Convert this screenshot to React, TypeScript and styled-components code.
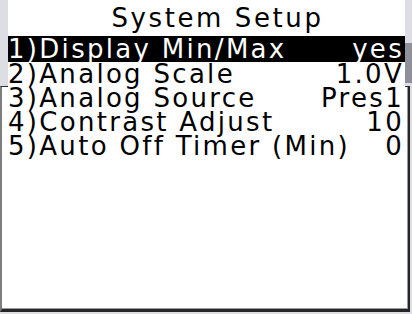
import React from "react";
import styled, { createGlobalStyle } from "styled-components";

const GlobalStyle = createGlobalStyle`
  html, body {
    margin: 0;
    padding: 0;
    width: 412px;
    height: 314px;
    overflow: hidden;
    background:
      linear-gradient(#8e9199, #8e9199) right 0 top 43px / 7px 40px no-repeat,
      #dcdee3;
    font-family: "DejaVu Sans", "Liberation Sans", sans-serif;
  }
`;

const Stage = styled.div`
  position: relative;
  width: 412px;
  height: 314px;
  box-sizing: border-box;
  padding-top: 86px;
`;

const Frame = styled.div`
  width: 410px;
  height: 226px;
  box-sizing: border-box;
  background: #ffffff;
  border-top: 1px solid #2b2b2b;
  border-left: 2px solid #7d7d7d;
  border-right: 2px solid #262626;
  border-bottom: 3px solid #262626;
  box-shadow: inset -1px -1px 0 #9a9a9a;
`;

const Screen = styled.div`
  position: absolute;
  top: 0;
  left: 8px;
  width: 397px;
  height: 170px;
  background: #ffffff;
  display: flex;
  flex-direction: column;
  color: #000;
  font-size: 26px;
  letter-spacing: 2.3px;
`;

const Title = styled.div`
  height: 36px;
  box-sizing: border-box;
  padding: 2px 0 0 22px;
  line-height: 32px;
  text-align: center;
  white-space: nowrap;
  letter-spacing: 2.6px;
`;

const Menu = styled.div`
  display: flex;
  flex-direction: column;
`;

const Row = styled.div<{ $active?: boolean }>`
  height: ${(p) => (p.$active ? "26px" : "24px")};
  line-height: 24px;
  display: flex;
  justify-content: space-between;
  align-items: center;
  padding-right: 1px;
  white-space: nowrap;
  background: ${(p) => (p.$active ? "#000" : "transparent")};
  color: ${(p) => (p.$active ? "#fff" : "#000")};
`;

const Label = styled.span``;
const Value = styled.span``;

const items = [
  { label: "1)Display Min/Max", value: "yes" },
  { label: "2)Analog Scale", value: "1.0V" },
  { label: "3)Analog Source", value: "Pres1" },
  { label: "4)Contrast Adjust", value: "10" },
  { label: "5)Auto Off Timer (Min)", value: "0" },
];

export default function App() {
  return (
    <>
      <GlobalStyle />
      <Stage>
        <Frame />
        <Screen>
          <Title>System Setup</Title>
          <Menu>
            {items.map((it, i) => (
              <Row key={it.label} $active={i === 0}>
                <Label>{it.label}</Label>
                <Value>{it.value}</Value>
              </Row>
            ))}
          </Menu>
        </Screen>
      </Stage>
    </>
  );
}
